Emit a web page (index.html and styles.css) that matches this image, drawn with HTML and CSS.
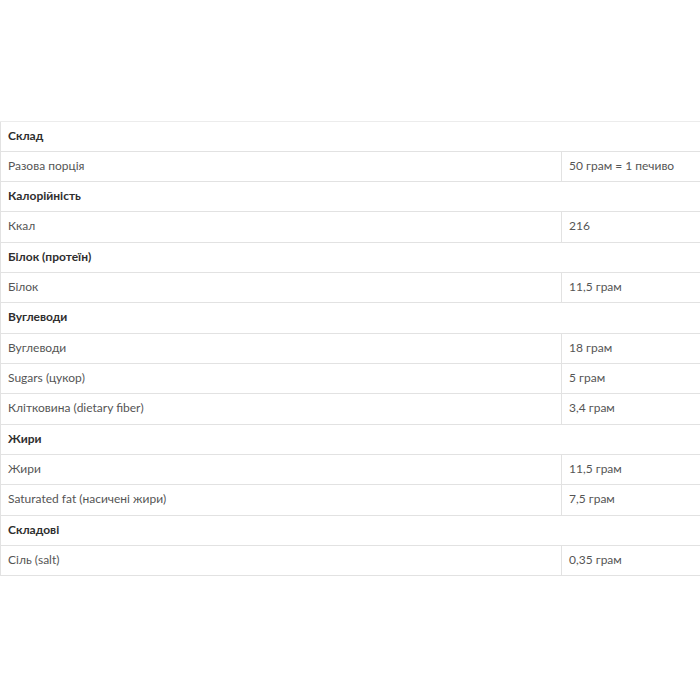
FILE: index.html
```html
<!DOCTYPE html>
<html lang="uk">
<head>
<meta charset="utf-8">
<link rel="stylesheet" href="styles.css">
</head>
<body>
<div class="page">
<table class="nutrition">
  <colgroup><col class="c1"><col class="c2"></colgroup>
  <thead><tr class="spacer"><th></th><th></th></tr></thead>
  <tbody>
    <tr class="group"><td colspan="2">Склад</td></tr>
    <tr><td>Разова порція</td><td>50 грам = 1 печиво</td></tr>
    <tr class="group"><td colspan="2">Калорійність</td></tr>
    <tr><td>Ккал</td><td>216</td></tr>
    <tr class="group"><td colspan="2">Білок (протеїн)</td></tr>
    <tr><td>Білок</td><td>11,5 грам</td></tr>
    <tr class="group"><td colspan="2">Вуглеводи</td></tr>
    <tr><td>Вуглеводи</td><td>18 грам</td></tr>
    <tr><td>Sugars (цукор)</td><td>5 грам</td></tr>
    <tr><td>Клітковина (dietary fiber)</td><td>3,4 грам</td></tr>
    <tr class="group"><td colspan="2">Жири</td></tr>
    <tr><td>Жири</td><td>11,5 грам</td></tr>
    <tr><td>Saturated fat (насичені жири)</td><td>7,5 грам</td></tr>
    <tr class="group"><td colspan="2">Складові</td></tr>
    <tr><td>Сіль (salt)</td><td>0,35 грам</td></tr>
  </tbody>
</table>
</div>
</body>
</html>
```
FILE: styles.css
```css
html, body {
  margin: 0;
  padding: 0;
  background: #ffffff;
  overflow: hidden;
}
.page {
  padding-top: 120.5px;
  width: 700px;
  overflow: hidden;
}
.nutrition {
  border-collapse: collapse;
  width: 720px;
  table-layout: fixed;
  font-family: Lato, "Open Sans", sans-serif;
  font-size: 12px;
  color: #555555;
}
.c1 { width: 561px; }
.c2 { width: 159px; }
.nutrition td {
  border: 1px solid #e2e2e2;
  padding: 4px 7px 6px;
  line-height: 19.33px;
  vertical-align: middle;
  white-space: nowrap;
}
.nutrition .spacer th {
  height: 0;
  padding: 0;
  border-left: 1px solid #ececec;
  border-right: 1px solid #ececec;
  border-bottom: 1px solid #ececec;
}
.nutrition .spacer th:first-child {
  border-left-color: transparent;
}
.nutrition .group td {
  font-weight: 700;
  color: #2e2e2e;
}
```
